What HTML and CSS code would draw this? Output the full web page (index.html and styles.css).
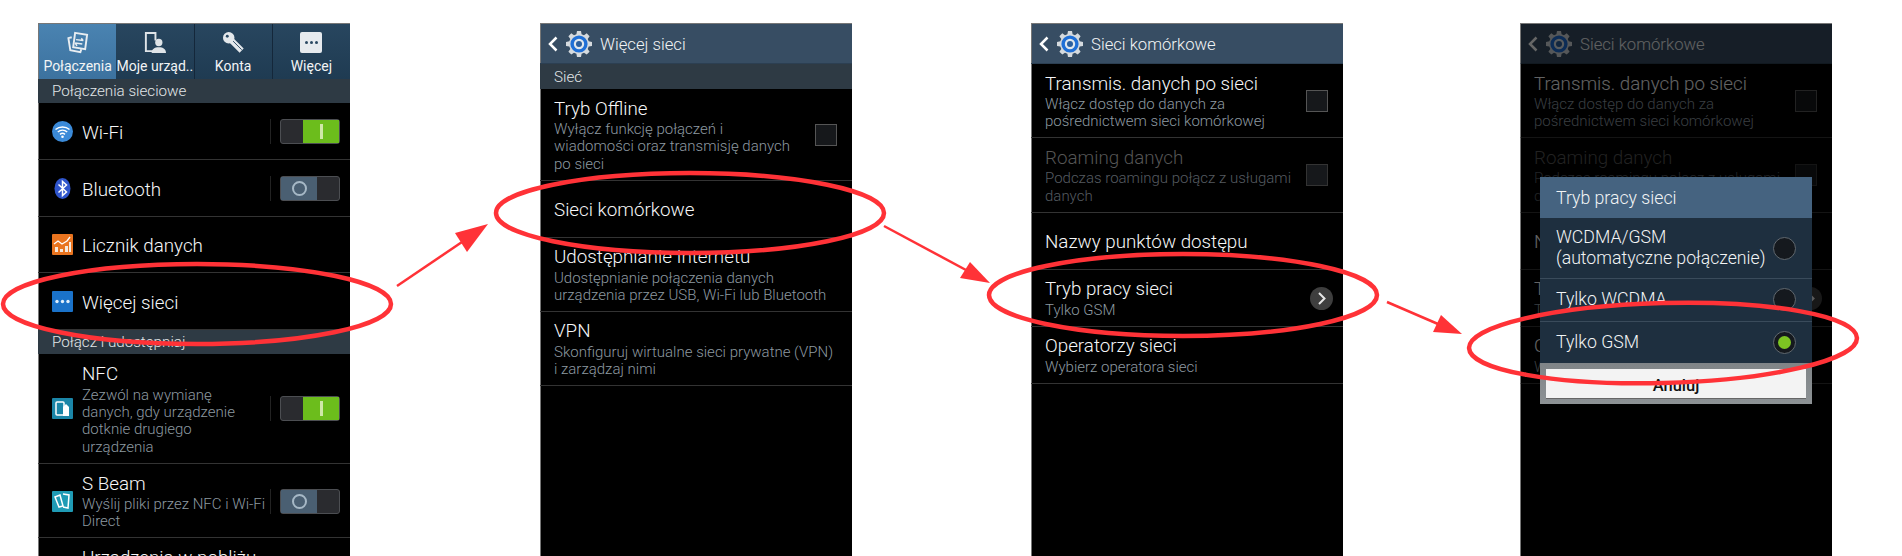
FILE: index.html
```html
<!DOCTYPE html>
<html lang="pl">
<head>
  <meta charset="UTF-8">
  <title>Tryb pracy sieci</title>
  <link rel="stylesheet" href="styles.css">
</head>
<body>
  <svg class="defs" width="0" height="0">
    <symbol id="gear" viewBox="0 0 26 26">
      <path fill="#d5dade" d="M11 0h4l.6 3.2 2.4 1 2.7-1.9 2.9 2.9-1.9 2.7 1 2.4 3.3.7v4l-3.3.6-1 2.4 1.9 2.7-2.9 2.9-2.7-1.9-2.4 1-.6 3.3h-4l-.6-3.3-2.4-1-2.7 1.9-2.9-2.9 1.9-2.7-1-2.4L0 15v-4l3.3-.7 1-2.4-1.9-2.7 2.9-2.9 2.7 1.9 2.4-1z"/>
      <circle cx="13" cy="13" r="8.6" fill="#1f6fd6"/>
      <circle cx="13" cy="13" r="5.2" fill="#dfe6ec"/>
      <circle cx="13" cy="13" r="3" fill="#2b5f9e"/>
    </symbol>
  </svg>

  <div class="shots">
    <!-- krok 1 -->
    <div class="phone">
      <div class="tabs">
        <div class="tab active">
          <svg class="tab-icon" viewBox="0 0 24 24"><path fill="none" stroke="#e8edf1" stroke-width="2" d="M9.500 2L22 4l-2 15-12.500-2z"/><path fill="none" stroke="#e8edf1" stroke-width="2" d="M6 6.500l-3.500 1L4.500 20l10.500 2 1-3"/><path fill="none" stroke="#e8edf1" stroke-width="1.500" d="M10.500 9l7.500 1M16 7.500l2 2.500M17 13.500l-7.500-1M11.500 15.500l-2-3"/></svg>
          <span>Połączenia</span>
        </div>
        <div class="tab">
          <svg class="tab-icon" viewBox="0 0 24 24"><path fill="none" stroke="#dfe4e8" stroke-width="2" d="M12 21H3V2h10v8"/><circle cx="16.500" cy="12" r="3.800" fill="#dfe4e8"/><path fill="#dfe4e8" d="M9 23c0-4 3-6 7.500-6s7.500 2 7.500 6z"/></svg>
          <span>Moje urząd..</span>
        </div>
        <div class="tab">
          <svg class="tab-icon" viewBox="0 0 24 24"><path fill="none" stroke="#e4e8eb" stroke-width="6" d="M9 9l11.500 11.500"/><path fill="none" stroke="#2a4862" d="M11 10l9.500 9.500"/><circle cx="7" cy="7" r="6" fill="#e4e8eb"/><circle cx="5.500" cy="5.500" r="1.500" fill="#2a4862"/></svg>
          <span>Konta</span>
        </div>
        <div class="tab last">
          <div class="more-icon"><i></i><i></i><i></i></div>
          <span>Więcej</span>
        </div>
      </div>
      <div class="section">Połączenia sieciowe</div>
      <div class="row">
        <svg class="icon" viewBox="0 0 21 21"><circle cx="10.500" cy="10.500" r="10.500" fill="#3b8ad8"/><path fill="none" stroke="#fff" stroke-width="1.500" d="M3.500 8.500c4-3.500 10-3.500 14 0M5.800 11c2.700-2.300 6.700-2.300 9.400 0M8 13.300c1.500-1.200 3.500-1.200 5 0"/><circle cx="10.500" cy="15.800" r="1.300" fill="#fff"/></svg>
        <div class="text"><div class="title">Wi-Fi</div></div>
        <div class="switch-wrap"><div class="switch on"><div class="knob"><i></i></div></div></div>
      </div>
      <div class="row">
        <svg class="icon" viewBox="0 0 21 21"><ellipse cx="10.500" cy="10.500" rx="8" ry="10.500" fill="#2f55cc"/><path fill="none" stroke="#fff" stroke-width="1.500" d="M6.500 6.500l8 7.500-4 3.500V3.500l4 3.500-8 7.500"/></svg>
        <div class="text"><div class="title">Bluetooth</div></div>
        <div class="switch-wrap"><div class="switch off"><div class="knob"><i></i></div></div></div>
      </div>
      <div class="row short">
        <svg class="icon" viewBox="0 0 21 21"><rect width="21" height="21" rx="1" fill="#e9741f"/><path fill="#f6e9dc" d="M3 18v-5h3v5zM8 18v-3h3v3zM13 18v-6h3v6zM17 18V8h2v10z"/><path fill="none" stroke="#fff" stroke-width="1.300" d="M2 10l4-3 4 3 5-3 3-4"/></svg>
        <div class="text"><div class="title">Licznik danych</div></div>
      </div>
      <div class="row">
        <svg class="icon" viewBox="0 0 21 21"><rect width="21" height="21" rx="1" fill="#1a72c9"/><circle cx="5" cy="10.500" r="1.700" fill="#dfeefb"/><circle cx="10.500" cy="10.500" r="1.700" fill="#dfeefb"/><circle cx="16" cy="10.500" r="1.700" fill="#dfeefb"/></svg>
        <div class="text"><div class="title">Więcej sieci</div></div>
      </div>
      <div class="section">Połącz i udostępniaj</div>
      <div class="row nfc">
        <svg class="icon" viewBox="0 0 21 21"><rect width="21" height="21" rx="1" fill="#1b86a8"/><rect x="4" y="4" width="8" height="13" rx="1" fill="none" stroke="#fff" stroke-width="1.500"/><path fill="#fff" d="M11 9l3-3 3 3v9h-6z"/></svg>
        <div class="text">
          <div class="title">NFC</div>
          <div class="sub">Zezwól na wymianę<br>danych, gdy urządzenie<br>dotknie drugiego<br>urządzenia</div>
        </div>
        <div class="switch-wrap"><div class="switch on"><div class="knob"><i></i></div></div></div>
      </div>
      <div class="row">
        <svg class="icon" viewBox="0 0 21 21"><rect width="21" height="21" rx="1" fill="#1f9bb5"/><path fill="none" stroke="#fff" stroke-width="1.500" d="M3 6l5-2 3 11-4 1zM11 3l6 1-1 13-5-1"/></svg>
        <div class="text">
          <div class="title">S Beam</div>
          <div class="sub">Wyślij pliki przez NFC i Wi-Fi<br>Direct</div>
        </div>
        <div class="switch-wrap"><div class="switch off"><div class="knob"><i></i></div></div></div>
      </div>
      <div class="row top">
        <div class="icon"></div>
        <div class="text"><div class="title">Urządzenia w pobliżu</div></div>
      </div>
    </div>

    <!-- krok 2 -->
    <div class="phone second">
      <div class="head">
        <svg class="back" viewBox="0 0 10 16"><path fill="none" stroke="#fff" stroke-width="2.500" d="M8.500 1.500L2 8l6.500 6.500"/></svg>
        <svg class="gear"><use href="#gear"/></svg>
        <span>Więcej sieci</span>
      </div>
      <div class="section tall">Sieć</div>
      <div class="row flat">
        <div class="text">
          <div class="title">Tryb Offline</div>
          <div class="sub">Wyłącz funkcję połączeń i<br>wiadomości oraz transmisję danych<br>po sieci</div>
        </div>
        <div class="check"></div>
      </div>
      <div class="row flat"><div class="text"><div class="title">Sieci komórkowe</div></div></div>
      <div class="row flat">
        <div class="text">
          <div class="title">Udostępnianie Internetu</div>
          <div class="sub">Udostępnianie połączenia danych<br>urządzenia przez USB, Wi-Fi lub Bluetooth</div>
        </div>
      </div>
      <div class="row flat">
        <div class="text">
          <div class="title">VPN</div>
          <div class="sub">Skonfiguruj wirtualne sieci prywatne (VPN)<br>i zarządzaj nimi</div>
        </div>
      </div>
    </div>

    <!-- krok 3 -->
    <div class="phone third">
      <div class="head">
        <svg class="back" viewBox="0 0 10 16"><path fill="none" stroke="#fff" stroke-width="2.500" d="M8.500 1.500L2 8l6.500 6.500"/></svg>
        <svg class="gear"><use href="#gear"/></svg>
        <span>Sieci komórkowe</span>
      </div>
      <div class="row flat">
        <div class="text">
          <div class="title">Transmis. danych po sieci</div>
          <div class="sub">Włącz dostęp do danych za<br>pośrednictwem sieci komórkowej</div>
        </div>
        <div class="check"></div>
      </div>
      <div class="row flat disabled">
        <div class="text">
          <div class="title">Roaming danych</div>
          <div class="sub">Podczas roamingu połącz z usługami<br>danych</div>
        </div>
        <div class="check"></div>
      </div>
      <div class="row flat"><div class="text"><div class="title">Nazwy punktów dostępu</div></div></div>
      <div class="row flat">
        <div class="text">
          <div class="title">Tryb pracy sieci</div>
          <div class="sub">Tylko GSM</div>
        </div>
        <div class="more"><svg viewBox="0 0 23 23"><path fill="none" stroke="#e6e6e6" stroke-width="2" d="M9 6l5.500 5.500L9 17"/></svg></div>
      </div>
      <div class="row flat">
        <div class="text">
          <div class="title">Operatorzy sieci</div>
          <div class="sub">Wybierz operatora sieci</div>
        </div>
      </div>
    </div>

    <!-- krok 4 -->
    <div class="phone fourth">
      <div class="dimmed">
        <div class="head">
          <svg class="back" viewBox="0 0 10 16"><path fill="none" stroke="#fff" stroke-width="2.500" d="M8.500 1.500L2 8l6.500 6.500"/></svg>
          <svg class="gear"><use href="#gear"/></svg>
          <span>Sieci komórkowe</span>
        </div>
        <div class="row flat">
          <div class="text">
            <div class="title">Transmis. danych po sieci</div>
            <div class="sub">Włącz dostęp do danych za<br>pośrednictwem sieci komórkowej</div>
          </div>
          <div class="check"></div>
        </div>
        <div class="row flat disabled">
          <div class="text">
            <div class="title">Roaming danych</div>
            <div class="sub">Podczas roamingu połącz z usługami<br>danych</div>
          </div>
          <div class="check"></div>
        </div>
        <div class="row flat"><div class="text"><div class="title">Nazwy punktów dostępu</div></div></div>
        <div class="row flat">
          <div class="text">
            <div class="title">Tryb pracy sieci</div>
            <div class="sub">Tylko GSM</div>
          </div>
          <div class="more"><svg viewBox="0 0 23 23"><path fill="none" stroke="#e6e6e6" stroke-width="2" d="M9 6l5.500 5.500L9 17"/></svg></div>
        </div>
        <div class="row flat">
          <div class="text">
            <div class="title">Operatorzy sieci</div>
            <div class="sub">Wybierz operatora sieci</div>
          </div>
        </div>
      </div>

      <div class="dialog">
        <div class="dialog-title">Tryb pracy sieci</div>
        <div class="option first"><span>WCDMA/GSM<br>(automatyczne połączenie)</span><div class="radio"></div></div>
        <div class="option"><span>Tylko WCDMA</span><div class="radio"></div></div>
        <div class="option"><span>Tylko GSM</span><div class="radio checked"></div></div>
        <div class="dialog-foot"><div class="cancel">Anuluj</div></div>
      </div>
    </div>
  </div>

  <!-- czerwone zaznaczenia na wierzchu -->
  <svg class="marks" viewBox="0 0 1902 556">
    <ellipse cx="197" cy="304" rx="194" ry="40"/>
    <ellipse cx="690" cy="213" rx="194" ry="40"/>
    <ellipse cx="1183" cy="295" rx="194" ry="41"/>
    <ellipse cx="1663" cy="343" rx="194" ry="40" transform="rotate(-1.500 1663 343)"/>
    <path class="line" d="M397 286L462 242"/>
    <path class="head-mark" d="M488 224L455 233L467 252Z"/>
    <path class="line" d="M884 226L966 270"/>
    <path class="head-mark" d="M990 283L970 262L960 278Z"/>
    <path class="line" d="M1387 302L1438 324"/>
    <path class="head-mark" d="M1462 334L1441 315L1433 332Z"/>
  </svg>
</body>
</html>
```

FILE: styles.css
```css
* {
  margin: 0;
  padding: 0;
  box-sizing: border-box;
}

html, body {
  height: 556px;
  overflow: hidden;
}

body {
  position: relative;
  background: white;
  font-family: 'Roboto', 'Liberation Sans', sans-serif;
  color: #f2f4f5;
}

.defs {
  position: absolute;
}

.shots {
  display: flex;
  padding: 23px 0 0 38px;
}

.phone {
  position: relative;
  width: 312px;
  height: 533px;
  flex-shrink: 0;
  overflow: hidden;
  background: black;
  box-shadow: inset 1px 1px 0 #777;
}

.second {
  margin-left: 190px;
}

.third {
  margin-left: 179px;
}

.fourth {
  margin-left: 177px;
}

.dimmed {
  opacity: 0.4;
}

/* tabs */
.tabs {
  display: flex;
  height: 56px;
  background: linear-gradient(#28465f, #1f3b52);
  border-top: 1px solid #777;
  border-left: 1px solid #777;
}

.tab {
  flex: 1;
  display: flex;
  flex-direction: column;
  align-items: center;
  border-right: 1px solid #14273a;
  font-size: 14px;
  white-space: nowrap;
  padding-top: 7px;
  gap: 4px;
}

.tab.active {
  background: linear-gradient(#4a83b1, #3c729f);
  border-right: none;
}

.tab.last {
  border-right: none;
}

.tab-icon {
  width: 23px;
  height: 23px;
}

.more-icon {
  width: 22px;
  height: 21px;
  margin-top: 1px;
  margin-bottom: 1px;
  display: flex;
  align-items: center;
  justify-content: center;
  gap: 2px;
  border-radius: 2px;
  background: #e6eaee;
}

.more-icon i {
  width: 3px;
  height: 3px;
  border-radius: 50%;
  background: #2a4862;
}

/* head */
.head {
  display: flex;
  align-items: center;
  height: 41px;
  padding: 1px 0 0 8px;
  background: #374d63;
  border-bottom: 1px solid #2c3f52;
  font-size: 16.700px;
  font-weight: 300;
  box-shadow: inset 1px 1px 0 #777;
}

.head span {
  padding-top: 2px;
}

.back {
  width: 10px;
  height: 16px;
  flex-shrink: 0;
}

.gear {
  width: 26px;
  height: 26px;
  margin-left: 8px;
  margin-right: 8px;
  flex-shrink: 0;
}

.section {
  height: 24px;
  line-height: 24px;
  padding-left: 14px;
  font-size: 15.200px;
  font-weight: 300;
  color: #e2e6e8;
  background: #2e3a44;
}

.section.tall {
  height: 25px;
  line-height: 26px;
}

/* rows */
.row {
  display: flex;
  align-items: center;
  min-height: 57px;
  padding: 7.500px 10px 6.670px 14px;
  border-bottom: 1px solid #333;
}

.row.short {
  min-height: 56px;
}

.row.nfc {
  min-height: 110px;
}

.row.top {
  align-items: flex-start;
  padding-top: 8px;
}

.icon {
  width: 21px;
  height: 21px;
  flex-shrink: 0;
  margin-right: 9px;
}

.row.top .icon {
  height: 0;
}

.text {
  flex: 1;
  min-width: 0;
  white-space: nowrap;
}

.title {
  font-size: 18.800px;
  font-weight: 300;
  line-height: 24px;
  margin-bottom: 0.500px;
  color: #f6f7f8;
}

.title:only-child {
  margin: 2.500px 0 0;
}

.row.top .title {
  margin: 0;
}

.sub {
  font-size: 15px;
  font-weight: 300;
  line-height: 17.330px;
  color: #8d99a1;
}

.disabled .title {
  color: #555;
}

.disabled .sub {
  color: #555b60;
}

.disabled .check {
  border-color: #333;
}

.check {
  width: 22px;
  height: 22px;
  flex-shrink: 0;
  margin-right: 5px;
  background: #16181b;
  border: 1px solid #555;
}

.more {
  width: 23px;
  height: 23px;
  flex-shrink: 0;
  border-radius: 50%;
  background: #3e3e3e;
}

/* switches */
.switch-wrap {
  flex-shrink: 0;
  padding-left: 9px;
  border-left: 1px solid #222;
}

.switch {
  display: flex;
  width: 60px;
  height: 25px;
  background: #2a2b2f;
  border: 1px solid #4c4e52;
  border-radius: 3px;
}

.switch.on {
  justify-content: flex-end;
}

.knob {
  display: flex;
  align-items: center;
  justify-content: center;
  width: 36px;
  background: #4a5f72;
}

.on .knob {
  background: #6cbd1c;
}

.on .knob i {
  width: 3px;
  height: 15px;
  background: #cfe8a8;
}

.off .knob i {
  width: 15px;
  height: 15px;
  border: 2px solid #a6b8c6;
  border-radius: 50%;
}

/* dialog */
.dialog {
  position: absolute;
  left: 20px;
  top: 154px;
  width: 272px;
  background: #1e2f3f;
  font-size: 17.700px;
  font-weight: 300;
  line-height: 21px;
}

.dialog-title {
  height: 41px;
  line-height: 43px;
  padding-left: 16px;
  background: #456380;
}

.option {
  display: flex;
  align-items: center;
  justify-content: space-between;
  min-height: 42.500px;
  padding: 9px 16px;
  border-top: 1px solid #3a4b5b;
}

.option.first {
  border-top: none;
}

.radio {
  width: 23px;
  height: 23px;
  flex-shrink: 0;
  border-radius: 50%;
  background: #15191e;
  border: 1px solid #60686f;
}

.radio.checked {
  display: flex;
  align-items: center;
  justify-content: center;
}

.radio.checked::after {
  content: "";
  width: 13px;
  height: 13px;
  border-radius: 50%;
  background: #7cc522;
}

.dialog-foot {
  padding: 6px 6px 5px;
  background: linear-gradient(#7f8487, #8d9295);
}

.cancel {
  height: 30px;
  line-height: 33px;
  text-align: center;
  font-size: 16.500px;
  font-weight: 500;
  color: #111;
  background: #f3f3f3;
  border-bottom: 1px solid #666;
}

/* marks */
.marks {
  position: absolute;
  left: 0;
  top: 0;
  width: 1902px;
  height: 556px;
}

.marks ellipse {
  fill: none;
  stroke: #ff3237;
  stroke-width: 4.500px;
}

.line {
  fill: none;
  stroke: #ff3237;
  stroke-width: 2.500px;
}

.head-mark {
  fill: #ff3237;
}
```
